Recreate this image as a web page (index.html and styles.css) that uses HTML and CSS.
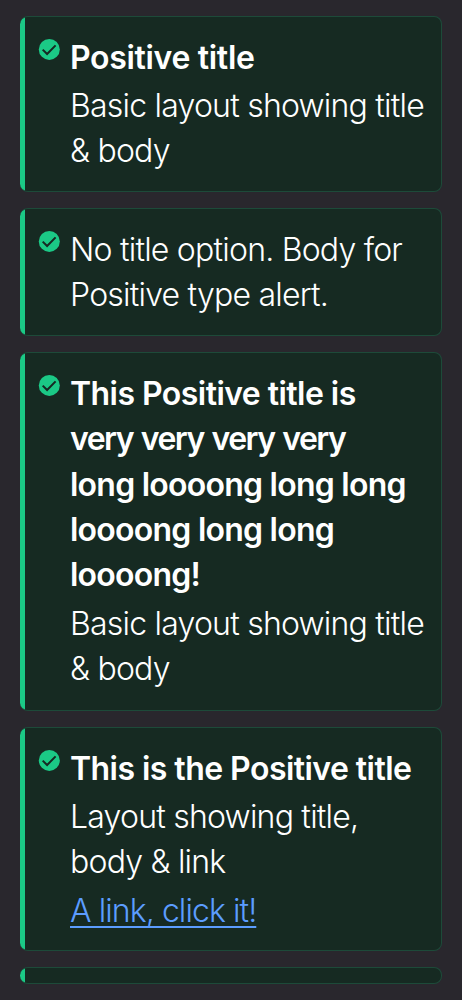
FILE: index.html
```
<!DOCTYPE html>
<html lang="en">
<head>
<meta charset="utf-8">
<title>Positive alerts</title>
<link rel="stylesheet" href="styles.css">
</head>
<body>
<svg width="0" height="0" class="defs"><symbol id="check" viewBox="0 0 22 22"><circle cx="11.3" cy="11.4" r="10.5" fill="#1bc986"/><path d="M4.7 11.6 9.1 16 17.6 7.4" fill="none" stroke="#162822" stroke-width="2"/></symbol></svg>
<main class="alerts">
  <section class="alert alert-basic">
    <svg class="icon"><use href="#check"/></svg>
    <div class="content">
      <h2 class="title"><span class="line loose">Positive title</span></h2>
      <p class="body"><span class="line">Basic layout showing title</span> <span class="line">&amp; body</span></p>
    </div>
  </section>
  <section class="alert alert-untitled">
    <svg class="icon"><use href="#check"/></svg>
    <div class="content">
      <p class="body"><span class="line">No title option. Body for</span> <span class="line">Positive type alert.</span></p>
    </div>
  </section>
  <section class="alert alert-long">
    <svg class="icon"><use href="#check"/></svg>
    <div class="content">
      <h2 class="title"><span class="line">This Positive title is</span> <span class="line very">very very very very</span> <span class="line tight">long loooong long long</span> <span class="line tight">loooong long long</span> <span class="line tight">loooong!</span></h2>
      <p class="body"><span class="line">Basic layout showing title</span> <span class="line">&amp; body</span></p>
    </div>
  </section>
  <section class="alert alert-link">
    <svg class="icon"><use href="#check"/></svg>
    <div class="content">
      <h2 class="title"><span class="line">This is the Positive title</span></h2>
      <p class="body"><span class="line">Layout showing title,</span> <span class="line">body &amp; link</span></p>
      <a class="link" href="#">A link, click it!</a>
    </div>
  </section>
  <section class="alert alert-empty"></section>
</main>
</body>
</html>
```
FILE: styles.css
```
* { box-sizing: border-box; }
body {
  margin: 0;
  background: #29272d;
  color: #fff;
  font-family: Inter, "Liberation Sans", sans-serif;
  font-size: 32px;
  line-height: 45.25px;
}
.defs { display: block; }
.alerts {
  display: flex;
  flex-direction: column;
  gap: 16px;
  padding: 16px 20px;
}
.alert {
  display: flex;
  gap: 10px;
  padding: 18px 0 0 18px;
  border: 1px solid #1d4a39;
  border-left: 0;
  border-radius: 8px;
  background: linear-gradient(to right, #1d4a39 0.5px, #1bc986 0.5px, #1bc986 5px, #162a22 5px);
  background-origin: border-box;
  overflow: hidden;
}
.alert-basic { height: 176px; }
.alert-untitled { height: 128px; }
.alert-long { height: 359px; }
.alert-link { height: 224px; }
.alert-empty { height: 17px; padding: 0; }
.icon { flex: none; width: 22px; height: 22px; margin-top: 3px; }
.content { display: flex; flex-direction: column; align-items: flex-start; gap: 3px; }
.alert-long .content { gap: 4px; }
.title, .body { margin: 0; }
.title { font-size: 32px; font-weight: 600; letter-spacing: -0.55px; }
.body, .link { font-weight: 300; letter-spacing: -0.78px; }
.body { line-height: 45px; }
.line { display: block; white-space: nowrap; }
.loose { letter-spacing: -0.32px; }
.tight { letter-spacing: -0.76px; }
.very { letter-spacing: -1.55px; word-spacing: 1.3px; }
.link {
  margin-top: 1px;
  color: #5c9dff;
  letter-spacing: -0.92px;
  text-decoration: underline;
  text-decoration-thickness: 2px;
  text-decoration-skip-ink: none;
  text-underline-offset: 4px;
}
```
